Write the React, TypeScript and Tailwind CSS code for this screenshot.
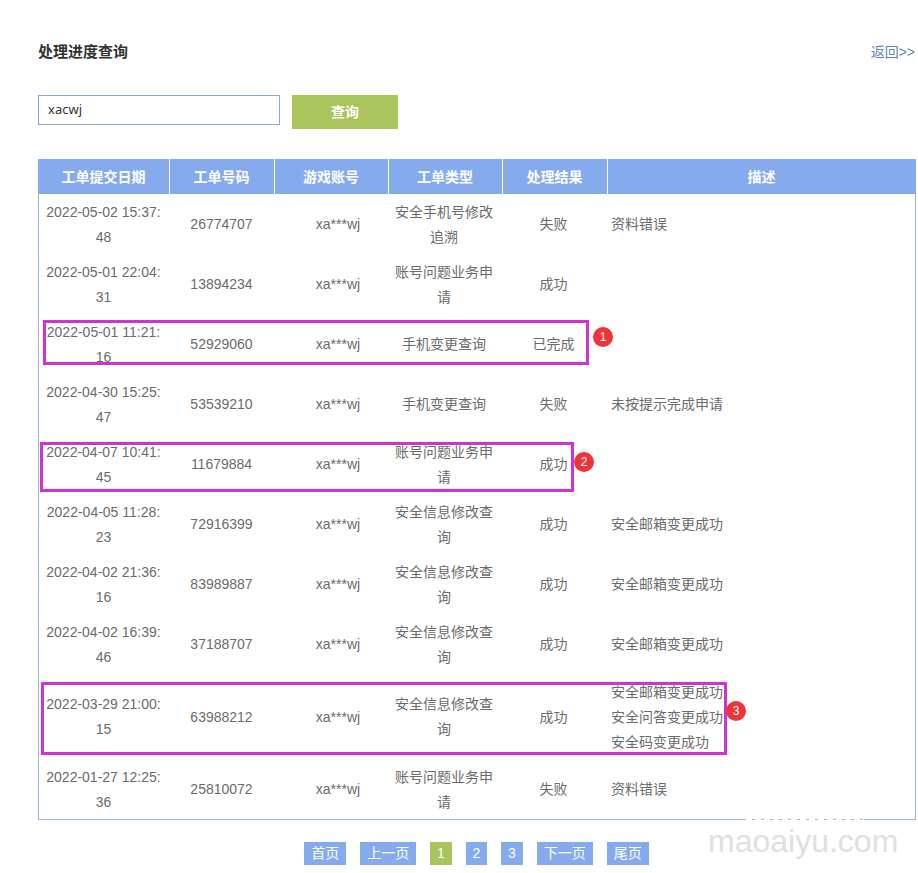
const rows: [string, string, string, string, string][] = [
  ["2022-05-02 15:37:48", "26774707", "安全手机号修改追溯", "失败", "资料错误"],
  ["2022-05-01 22:04:31", "13894234", "账号问题业务申请", "成功", ""],
  ["2022-05-01 11:21:16", "52929060", "手机变更查询", "已完成", ""],
  ["2022-04-30 15:25:47", "53539210", "手机变更查询", "失败", "未按提示完成申请"],
  ["2022-04-07 10:41:45", "11679884", "账号问题业务申请", "成功", ""],
  ["2022-04-05 11:28:23", "72916399", "安全信息修改查询", "成功", "安全邮箱变更成功"],
  ["2022-04-02 21:36:16", "83989887", "安全信息修改查询", "成功", "安全邮箱变更成功"],
  ["2022-04-02 16:39:46", "37188707", "安全信息修改查询", "成功", "安全邮箱变更成功"],
  ["2022-03-29 21:00:15", "63988212", "安全信息修改查询", "成功", "安全邮箱变更成功\n安全问答变更成功\n安全码变更成功"],
  ["2022-01-27 12:25:36", "25810072", "账号问题业务申请", "失败", "资料错误"],
];

const headers = ["工单提交日期", "工单号码", "游戏账号", "工单类型", "处理结果", "描述"];
const pages = ["首页", "上一页", "1", "2", "3", "下一页", "尾页"];

function Mark({ box, badge, label }: { box: string; badge: string; label: string }) {
  return (
    <>
      <div className={`absolute border-[3px] border-[#cf31d2] ${box}`} />
      <div
        className={`absolute flex h-[20px] w-[20px] items-center justify-center rounded-full bg-[#ee3339] text-[12px] text-white ${badge}`}
      >
        {label}
      </div>
    </>
  );
}

export default function App() {
  return (
    <div className="relative h-[873px] w-[918px] overflow-hidden bg-white pl-[38px] pt-[43px] font-['Liberation_Sans','Noto_Sans_CJK_SC',sans-serif] text-[14px] text-[#6b6b6b]">
      <div className="flex h-[18px] w-[878px] items-center justify-between leading-[18px]">
        <span className="text-[15px] font-bold text-[#333]">处理进度查询</span>
        <a className="pr-[1px] text-[#5f86b5]">返回&gt;&gt;</a>
      </div>

      <div className="mt-[34px] flex items-start">
        <input
          readOnly
          value="xacwj"
          className="h-[30px] w-[242px] border border-[#8ba8c8] px-[9px] pb-[3px] font-['Noto_Sans',sans-serif] text-[13px] text-[#333] outline-none"
        />
        <button className="ml-[12px] h-[34px] w-[106px] bg-[#a8c45a] font-bold text-white">查询</button>
      </div>

      <table className="mt-[30px] w-[878px] table-fixed border-separate border-spacing-0 [&_tbody_td]:border-[#a0b7d2] [&_tbody_td:first-child]:border-l [&_tbody_td:last-child]:border-r [&_tbody_tr:last-child_td]:border-b">
        <colgroup>
          <col className="w-[132px]" />
          <col className="w-[105px]" />
          <col className="w-[114px]" />
          <col className="w-[114px]" />
          <col className="w-[105px]" />
          <col className="w-[308px]" />
        </colgroup>
        <thead>
          <tr>
            {headers.map((h, i) => (
              <th
                key={h}
                className={`h-[35px] bg-[#85abee] p-0 pt-[2px] text-center font-bold text-white ${i < 5 ? "border-r border-white" : ""} ${i > 0 && i < 6 ? "pr-[1px]" : ""}`}
              >
                {h}
              </th>
            ))}
          </tr>
        </thead>
        <tbody>
          {rows.map((r, i) => {
            const tall = i === 8;
            const twoLine = tall ? "py-[5px]" : "pt-[6px] pb-[4px]";
            const oneLine = tall ? "pt-[6px] pb-[4px]" : "py-[5px]";
            return (
              <tr key={r[0]} className="leading-[25px]">
                <td className={`pl-[7px] pr-[9px] text-center break-all ${twoLine}`}>{r[0]}</td>
                <td className={`pl-[7px] pr-[9px] text-center ${oneLine}`}>{r[1]}</td>
                <td className={`pl-[13px] pr-[1px] text-center ${oneLine}`}>xa***wj</td>
                <td className={`pl-[6px] pr-[10px] text-center ${r[2].length > 7 ? twoLine : oneLine}`}>{r[2]}</td>
                <td className={`pl-[6px] pr-[10px] text-center ${oneLine}`}>{r[3]}</td>
                <td className={`pl-[3px] whitespace-pre-line ${tall ? "pt-[6px] pb-[4px]" : "py-[5px]"}`}>{r[4]}</td>
              </tr>
            );
          })}
        </tbody>
      </table>

      <div className="mt-[22px] flex w-[877px] justify-center gap-[14px]">
        {pages.map((p) => (
          <span
            key={p}
            className={`h-[23px] leading-[23px] text-center text-white ${p.length === 1 ? "w-[21.5px]" : "px-[7px]"} ${p === "1" ? "bg-[#a8c45a]" : "bg-[#85abee]"}`}
          >
            {p}
          </span>
        ))}
      </div>

      <Mark box="left-[43px] top-[320px] h-[45px] w-[546px]" badge="left-[593px] top-[327px]" label="1" />
      <Mark box="left-[40px] top-[442px] h-[50px] w-[534px]" badge="left-[574px] top-[452px]" label="2" />
      <Mark box="left-[41px] top-[682px] h-[73px] w-[686px]" badge="left-[726px] top-[701px]" label="3" />

      <div className="absolute left-[746px] top-[819px] h-[2px] w-[118px] bg-[repeating-linear-gradient(90deg,#ffffff_0,#ffffff_6px,transparent_6px,transparent_9px)]" />
      <div className="absolute left-[708px] top-[823px] text-[32px] leading-[37px] text-[#e0e0e0]">maoaiyu.com</div>
    </div>
  );
}
